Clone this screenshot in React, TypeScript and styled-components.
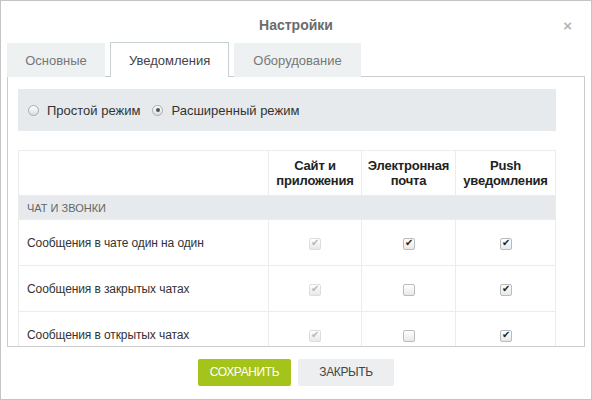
import styled, { createGlobalStyle } from 'styled-components';

const Global = createGlobalStyle`
	html, body { margin: 0; padding: 0; background: #fff; }
	body { font-family: 'Liberation Sans', Arial, sans-serif; font-size: 13px; color: #333; }
`;

const rows = [
	{ title: 'Сообщения в чате один на один', email: true },
	{ title: 'Сообщения в закрытых чатах', email: false },
	{ title: 'Сообщения в открытых чатах', email: false },
	{ title: 'Упоминания', email: true },
];

const App = () => (
	<Window>
		<Global />
		<Header>
			<Title>Настройки</Title>
			<Close>×</Close>
		</Header>
		<Tabs>
			<Tab>Основные</Tab>
			<Tab active>Уведомления</Tab>
			<Tab>Оборудование</Tab>
		</Tabs>
		<Panel>
			<ModeBox>
				<Radio>
					<RadioInput type='radio' name='mode' />
					Простой режим
				</Radio>
				<Radio>
					<RadioInput type='radio' name='mode' defaultChecked />
					Расширенный режим
				</Radio>
			</ModeBox>
			<Table>
				<colgroup>
					<col style={{ width: 250 }} />
					<col style={{ width: 93 }} />
					<col style={{ width: 94 }} />
					<col />
				</colgroup>
				<thead>
					<tr>
						<Th />
						<Th>Сайт и<br />приложения</Th>
						<Th>Электронная<br />почта</Th>
						<Th>Push<br />уведомления</Th>
					</tr>
				</thead>
				<tbody>
					<tr>
						<Section colSpan={4}>ЧАТ И ЗВОНКИ</Section>
					</tr>
					{rows.map((r) => (
						<tr key={r.title}>
							<Label>{r.title}</Label>
							<Cell><Check type='checkbox' checked disabled readOnly /></Cell>
							<Cell><Check type='checkbox' defaultChecked={r.email} /></Cell>
							<Cell><Check type='checkbox' defaultChecked /></Cell>
						</tr>
					))}
				</tbody>
			</Table>
		</Panel>
		<Footer>
			<Button primary>СОХРАНИТЬ</Button>
			<Button>ЗАКРЫТЬ</Button>
		</Footer>
	</Window>
);

export default App;

const Window = styled.div`
	width: 592px;
	height: 400px;
	box-sizing: border-box;
	border: 1px solid #c4c4c4;
	padding: 0 6px;
	display: flex;
	flex-direction: column;
`;

const Header = styled.div`
	height: 42px;
	display: flex;
	align-items: center;
	justify-content: center;
	position: relative;
`;

const Title = styled.h1`
	margin: 0 0 -6px;
	font-size: 14px;
	font-weight: 700;
	color: #6b6b6b;
`;

const Close = styled.span`
	position: absolute;
	right: 13px;
	top: 16px;
	font-size: 15px;
	font-weight: 700;
	color: #b5b5b5;
`;

const Tabs = styled.div`
	display: flex;
	align-items: flex-end;
	gap: 5px;
	height: 34px;
	position: relative;
	z-index: 1;
`;

const Tab = styled.div<{ active?: boolean }>`
	padding: 0 18px;
	display: flex;
	align-items: center;
	color: ${({ active }) => (active ? '#444' : '#777')};
	background: ${({ active }) => (active ? '#fff' : '#eef1f2')};
	border: 1px solid ${({ active }) => (active ? '#c8d0d4' : 'transparent')};
	border-bottom: none;
	height: ${({ active }) => (active ? 35 : 34)}px;
	box-sizing: border-box;
	&:first-child { width: 98px; justify-content: center; padding: 0; }
`;

const Panel = styled.div`
	height: 271px;
	box-sizing: border-box;
	border: 1px solid #ccc;
	margin-top: -1px;
	padding: 12px 0 0 10px;
	overflow-y: scroll;
	&::-webkit-scrollbar { width: 14px; }
	&::-webkit-scrollbar-thumb { background: #e0e0e0; border: 4px solid #fff; border-top-width: 10px; }
`;

const ModeBox = styled.div`
	width: 538px;
	height: 42px;
	background: #e6eaec;
	display: flex;
	align-items: center;
	gap: 12px;
	padding-left: 10px;
	box-sizing: border-box;
	margin-bottom: 19px;
`;

const Radio = styled.label`
	display: flex;
	align-items: center;
	gap: 8px;
	color: #333;
`;

const RadioInput = styled.input`
	appearance: none;
	margin: 0;
	width: 11px;
	height: 11px;
	border-radius: 50%;
	border: 1px solid #aaa;
	background: linear-gradient(#fff, #ddd);
	position: relative;
	&:checked::after {
		content: '';
		position: absolute;
		left: 2.5px;
		top: 2.5px;
		width: 4px;
		height: 4px;
		border-radius: 50%;
		background: #555;
	}
`;

const Check = styled.input`
	appearance: none;
	margin: 0;
	width: 12px;
	height: 12px;
	border-radius: 2px;
	border: 1px solid #bbb;
	background: linear-gradient(#fff, #e8e8e8);
	vertical-align: middle;
	position: relative;
	&:checked::after {
		content: '✔';
		position: absolute;
		left: 1px;
		top: -2px;
		font-size: 10px;
		color: #222;
	}
	&:disabled { border-color: #ddd; }
	&:disabled:checked::after { color: #b8b8b8; }
`;

const Table = styled.table`
	width: 538px;
	border-collapse: collapse;
	table-layout: fixed;
	td, th { border: 1px solid #ececec; }
`;

const Th = styled.th`
	height: 42px;
	font-weight: 700;
	font-size: 13px;
	color: #222;
	line-height: 15px;
	letter-spacing: -0.2px;
`;

const Section = styled.td`
	height: 21px;
	background: #e6eaec;
	color: #666;
	font-size: 11px;
	padding-left: 8px;
`;

const Label = styled.td`
	height: 45px;
	padding: 0 0 0 8px;
	font-size: 12px;
	letter-spacing: -0.1px;
	color: #333;
`;

const Cell = styled.td`
	text-align: center;
	padding: 0;
`;

const Footer = styled.div`
	flex: 1;
	display: flex;
	justify-content: center;
	align-items: center;
	gap: 7px;
	padding-bottom: 2px;
`;

const Button = styled.button<{ primary?: boolean }>`
	height: 27px;
	width: ${({ primary }) => (primary ? 93 : 96)}px;
	border: none;
	border-radius: 2px;
	font-family: 'Liberation Sans', Arial, sans-serif;
	font-size: 12px;
	letter-spacing: -0.4px;
	color: ${({ primary }) => (primary ? '#fff' : '#444')};
	background: ${({ primary }) => (primary ? '#a4c31b' : '#eceef0')};
`;
